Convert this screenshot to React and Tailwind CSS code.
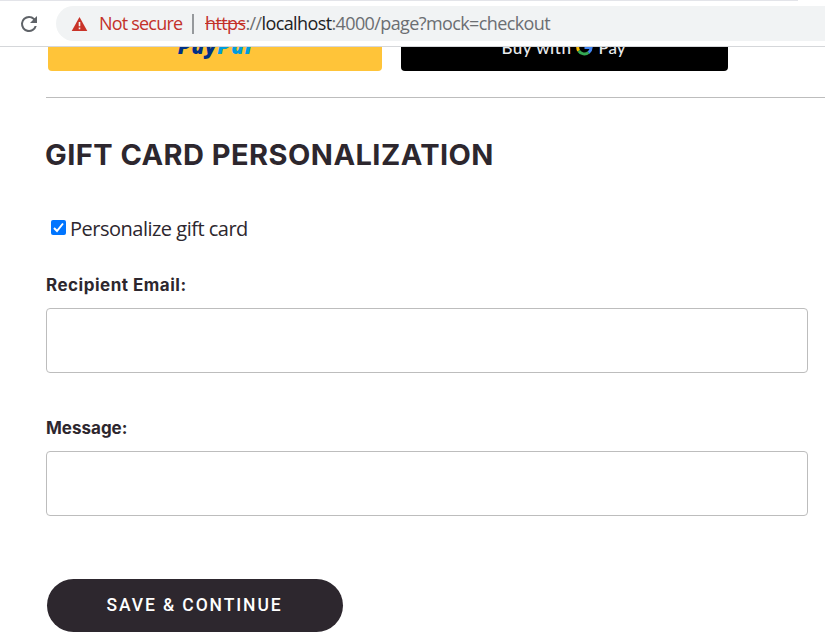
import React from "react";

function Field({ label, labelClass, className }) {
  return (
    <label className={`block w-[762px] ${className}`}>
      <span className={`block h-6 whitespace-nowrap font-['Inter',sans-serif] text-[17px] font-bold leading-[25px] ${labelClass}`}>
        {label}
      </span>
      <input className="mt-[11px] block h-[65px] w-full rounded-[4px] border border-[#bdbdbd] bg-white px-4 outline-none" />
    </label>
  );
}

function AddressBar() {
  return (
    <header className="flex h-[47px] flex-col border-b border-[#d5d7da] bg-white">
      <div className="h-px w-[798px] bg-[#e3e4e9]" />
      <div className="mt-[5px] flex h-[35px] items-center">
        <svg className="ml-[17px] h-6 w-6 shrink-0" viewBox="0 0 24 24" fill="#5f6368">
          <path d="M17.65 6.35A7.95 7.95 0 0 0 12 4a8 8 0 1 0 7.73 10h-2.08A6 6 0 1 1 12 6c1.66 0 3.14.69 4.22 1.78L13 11h7V4z" />
        </svg>
        <div className="ml-[15px] flex h-[35px] flex-1 items-center rounded-l-full bg-[#f1f3f4] whitespace-nowrap font-['Open_Sans',sans-serif] text-[18px]">
          <svg className="ml-[15px] h-[16px] w-[17px] shrink-0" viewBox="0 0 17 16">
            <path d="M8.5 1 16.3 15H.7Z" fill="#c93328" />
            <path d="M8.5 6v4.2M8.5 11.5v1.7" stroke="#f1f3f4" strokeWidth="1.6" />
          </svg>
          <span className="ml-[11px] w-[93px] tracking-[-0.8px] text-[#c33129]">Not secure</span>
          <span className="h-5 w-[2px] bg-[#96999c]" />
          <span className="ml-[11px] tracking-[-0.61px] text-[#6b6e72]">
            <span className="text-[#c33129] line-through decoration-1">https</span>
            ://<span className="text-[#202124]">localhost</span>:4000/page?mock=checkout
          </span>
        </div>
      </div>
    </header>
  );
}

function GoogleMark() {
  return (
    <svg className="h-[17px] w-[17px]" viewBox="0 0 24 24" fill="none" strokeWidth="4.2">
      <path d="M18.5 5A9.5 9.5 0 0 0 3.8 7.3" stroke="#ea4335" />
      <path d="M3.8 7.3a9.5 9.5 0 0 0 0 9.4" stroke="#fbbc04" />
      <path d="M3.8 16.7A9.5 9.5 0 0 0 17.8 19" stroke="#34a853" />
      <path d="M17.8 19a9 9 0 0 0 3.6-7H12" stroke="#4285f4" />
    </svg>
  );
}

export default function App() {
  return (
    <div className="h-[638px] w-[825px] overflow-hidden bg-white text-[#2d272e]">
      <AddressBar />
      <div className="flex h-[25px] items-end gap-[19px] overflow-hidden pb-px pl-12">
        <button className="flex h-[50px] w-[334px] shrink-0 items-center justify-center rounded-[4px] bg-[#ffc439] font-['Open_Sans',sans-serif] text-[21px] font-extrabold italic leading-6 tracking-[0.8px]">
          <span className="text-[#003087]">Pay</span>
          <span className="text-[#009cde]">Pal</span>
        </button>
        <button className="flex h-[50px] w-[327px] shrink-0 items-center justify-center rounded-[4px] bg-black pt-[3px] font-['Lato',sans-serif] text-[17px] font-medium leading-6 text-[#e8eaed]">
          <span className="tracking-[0.5px]">Buy with</span>
          <span className="mx-[5px]">
            <GoogleMark />
          </span>
          <span className="mr-[2px]">Pay</span>
        </button>
      </div>
      <main className="pl-[46px]">
        <hr className="mt-[25px] border-0 border-t border-[#bdbdbd]" />
        <h2 className="-ml-px mt-[37px] h-10 whitespace-nowrap font-['Inter',sans-serif] text-[29px] font-bold leading-10 tracking-[0.45px]">
          GIFT CARD PERSONALIZATION
        </h2>
        <label className="mt-[39px] flex h-[30px] items-center pl-[5px]">
          <span className="mb-[3px] flex h-[15px] w-[15px] items-center justify-center rounded-[2px] bg-[#0075ff]">
            <svg className="h-[15px] w-[15px]" viewBox="0 0 15 15" fill="none" stroke="white" strokeWidth="2">
              <path d="m3 8 3 3 6-7.5" />
            </svg>
          </span>
          <span className="ml-[4px] whitespace-nowrap font-['Open_Sans',sans-serif] text-[20px] leading-[30px] tracking-[-0.5px]">
            Personalize gift card
          </span>
        </label>
        <Field className="mt-[29px]" label="Recipient Email:" labelClass="tracking-[0.5px]" />
        <Field className="mt-[43px]" label="Message:" labelClass="tracking-[0px]" />
        <button className="ml-px mt-[63px] flex h-[53px] w-[296px] items-center justify-center rounded-full bg-[#2d272e] pr-px font-['Roboto',sans-serif] text-[17.5px] font-medium tracking-[1.9px] text-white">
          SAVE &amp; CONTINUE
        </button>
      </main>
    </div>
  );
}
